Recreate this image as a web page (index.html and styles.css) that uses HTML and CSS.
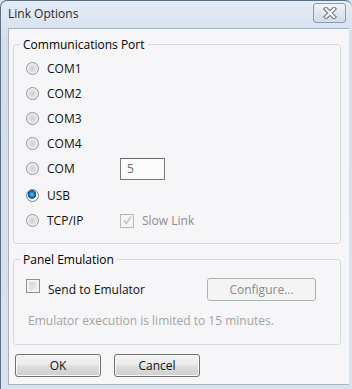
FILE: index.html
```html
<!DOCTYPE html>
<html lang="en">
<head>
    <meta charset="UTF-8">
    <title>Link Options</title>
    <link rel="stylesheet" href="styles.css">
</head>
<body>
    <div class="window">
        <div class="titlebar">
            <span class="title">Link Options</span>
            <button class="close" type="button" aria-label="Close">
                <svg width="18" height="12" viewBox="0 0 18 12">
                    <path d="M5 2 L13 10 M13 2 L5 10" stroke="#6f7a88" stroke-width="4.4" stroke-linecap="square"/>
                    <path d="M5 2 L13 10 M13 2 L5 10" stroke="#ffffff" stroke-width="2.2" stroke-linecap="square"/>
                </svg>
            </button>
        </div>

        <div class="client">
            <fieldset class="group port">
                <legend>Communications Port</legend>
                <div class="row"><span class="radio"></span><span class="label">COM1</span></div>
                <div class="row"><span class="radio"></span><span class="label">COM2</span></div>
                <div class="row"><span class="radio"></span><span class="label">COM3</span></div>
                <div class="row"><span class="radio"></span><span class="label">COM4</span></div>
                <div class="row">
                    <span class="radio"></span><span class="label">COM</span>
                    <span class="textbox">5</span>
                </div>
                <div class="row usb"><span class="radio checked"></span><span class="label">USB</span></div>
                <div class="row">
                    <span class="radio"></span><span class="label">TCP/IP</span>
                    <span class="check disabled checked">
                        <svg width="11" height="11" viewBox="0 0 11 11">
                            <path d="M2 5.5 L4.3 8.5 L9 1.5" fill="none" stroke="#b9b9b9" stroke-width="1.3"/>
                        </svg>
                    </span>
                    <span class="label dim">Slow Link</span>
                </div>
            </fieldset>

            <fieldset class="group emu">
                <legend>Panel Emulation</legend>
                <div class="emu-row">
                    <span class="check"></span>
                    <span class="label">Send to Emulator</span>
                    <button class="btn disabled" type="button">Configure...</button>
                </div>
                <p class="note">Emulator execution is limited to 15 minutes.</p>
            </fieldset>

            <div class="actions">
                <button class="btn" type="button">OK</button>
                <button class="btn" type="button">Cancel</button>
            </div>
        </div>
    </div>
</body>
</html>
```

FILE: styles.css
```css
body {
    margin: 0;
    font-family: "Open Sans", "Noto Sans", sans-serif;
    font-size: 12px;
    color: #111;
    background: #d9e4f1;
}
.window {
    width: 352px;
    height: 389px;
    overflow: hidden;
    box-sizing: border-box;
    border: 1px solid #5d6f86;
    border-right: none;
    border-bottom: none;
    border-radius: 7px 7px 0 0;
    background: linear-gradient(#e4ecf6, #d3deeb 40px, #d9e3ef);
}
.titlebar {
    height: 27px;
    display: flex;
    align-items: center;
    justify-content: space-between;
    padding: 0 6px 0 7px;
}
.title {
    font-size: 12px;
    color: #2b2b2b;
    margin-top: -2px;
}
.close {
    width: 33px;
    height: 20px;
    margin-top: -3px;
    padding: 0;
    border: 1px solid #8d9aab;
    border-radius: 3px;
    background: linear-gradient(#f1f4f8, #dfe6ee 50%, #d2dbe6);
    display: flex;
    align-items: center;
    justify-content: center;
}
.client {
    margin-left: 7px;
    width: 341px;
    height: 357px;
    box-sizing: border-box;
    border: 1px solid #a8b2bd;
    border-right: none;
    background: #f6f6f8;
    padding: 7px 8px 0 4px;
}
.group {
    margin: 0;
    border: 1px solid #d5dadf;
    border-radius: 3px;
    padding: 3px 0 0 12px;
}
.group legend {
    padding: 0 3px;
    margin-left: -6px;
    color: #000;
}
.port {
    padding-bottom: 10px;
}
.row {
    height: 25px;
    display: flex;
    align-items: center;
}
.row.usb {
    margin-top: 2px;
}
.radio {
    width: 13px;
    height: 13px;
    box-sizing: border-box;
    border-radius: 50%;
    border: 1px solid #8f9398;
    background: radial-gradient(circle at 50% 50%, #cfcfcf 0, #dedede 3px, #efefef 5px, #fbfbfb 6px);
    margin-right: 8px;
    flex: none;
}
.radio.checked {
    border-color: #6f8498;
    background: radial-gradient(circle at 45% 40%, #7fc3f0 0, #2a86c8 2px, #0d4f8f 4px, #e8eef3 4.6px, #ffffff 6px);
}
.label {
    width: 73px;
}
.textbox {
    width: 45px;
    height: 22px;
    box-sizing: border-box;
    border: 1px solid #7a7a7a;
    border-top-color: #6b6b6b;
    background: #fcfcfc;
    color: #6d6d6d;
    padding-left: 6px;
    line-height: 20px;
}
.check {
    width: 14px;
    height: 14px;
    box-sizing: border-box;
    border: 1px solid #8e8f8f;
    background: linear-gradient(135deg, #d0d0d0, #f2f2f2);
    box-shadow: inset 0 0 0 2px #f4f4f4;
    flex: none;
    display: flex;
    align-items: center;
    justify-content: center;
}
.check.disabled {
    border-color: #b8b8b8;
    background: #f4f4f4;
    box-shadow: none;
}
.row .check {
    margin-right: 8px;
}
.label.dim {
    color: #8d8d8d;
}
.emu-row {
    display: flex;
    align-items: center;
    height: 30px;
    margin-top: 3px;
}
.emu-row .check {
    margin-right: 8px;
    margin-top: -6px;
}
.emu-row .label {
    width: 159px;
}
.btn {
    width: 86px;
    height: 23px;
    box-sizing: border-box;
    border: 1px solid #707070;
    border-radius: 3px;
    background: linear-gradient(#f2f2f2, #ebebeb 48%, #dddddd 52%, #cfcfcf);
    box-shadow: inset 0 0 0 1px #fbfbfb;
    font: inherit;
    color: #111;
    padding: 0;
}
.btn.disabled {
    width: 109px;
    border-color: #adb2b5;
    background: #f4f4f4;
    box-shadow: none;
    color: #8a8a8a;
}
.note {
    margin: 8px 0 15px 2px;
    color: #a3a3a3;
}
.emu {
    margin-top: 7px;
}
.actions {
    display: flex;
    gap: 13px;
    margin-top: 9px;
    padding-left: 2px;
}
```
